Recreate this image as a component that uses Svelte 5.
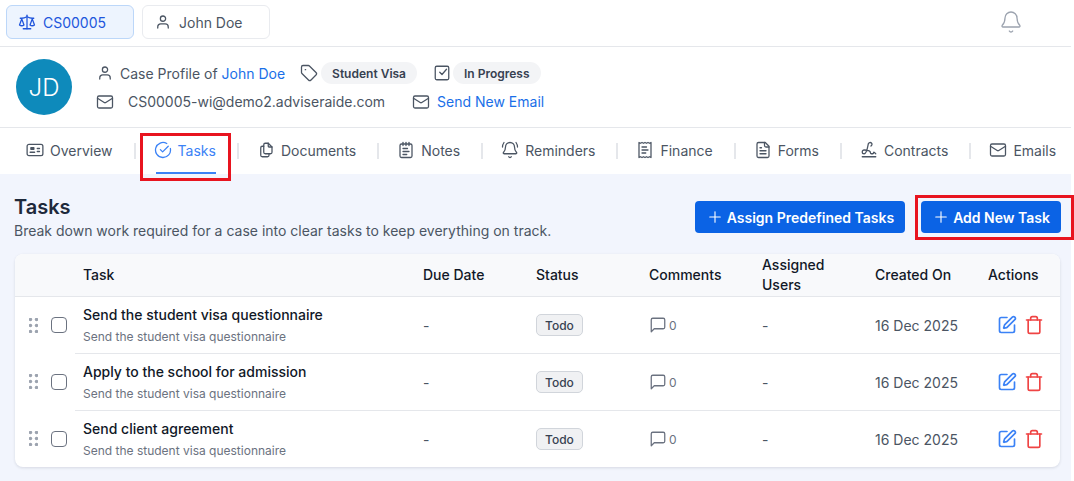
<script>
const I = {
  scale: ["m16 16 3-8 3 8c-.87.65-1.92 1-3 1s-2.13-.35-3-1Z","m2 16 3-8 3 8c-.87.65-1.92 1-3 1s-2.13-.35-3-1Z","M7 21h10","M12 3v18","M3 7h2c2 0 5-1 7-2 2 1 5 2 7 2h2"],
  user: ["M8.500 7.500a3.500 3.500 0 1 0 7 0a3.500 3.500 0 0 0 -7 0","M19 20v-1.500a4 4 0 0 0-4-4H9a4 4 0 0 0-4 4v1.500"],
  tag: ["M12.586 2.586A2 2 0 0 0 11.172 2H4a2 2 0 0 0-2 2v7.172a2 2 0 0 0 .586 1.414l8.704 8.704a2.426 2.426 0 0 0 3.420 0l6.580-6.580a2.426 2.426 0 0 0 0-3.420z","M7 7.500h.5"],
  check: ["M5 3h14a2 2 0 0 1 2 2v14a2 2 0 0 1-2 2H5a2 2 0 0 1-2-2V5a2 2 0 0 1 2-2z","m9 11 3 3 6-7"],
  bell: ["M10.268 21a2 2 0 0 0 3.464 0","M3.262 15.326A1 1 0 0 0 4 17h16a1 1 0 0 0 .74-1.673C19.410 13.956 18 12.499 18 8A6 6 0 0 0 6 8c0 4.499-1.411 5.956-2.738 7.326"],
  mail: ["M4 4h16a2 2 0 0 1 2 2v12a2 2 0 0 1-2 2H4a2 2 0 0 1-2-2V6a2 2 0 0 1 2-2z","m22 7-8.970 5.700a1.940 1.940 0 0 1-2.060 0L2 7"],
  card: ["M4 4.500h16a2.500 2.500 0 0 1 2.500 2.500v10a2.500 2.500 0 0 1-2.500 2.500H4a2.500 2.500 0 0 1-2.500-2.500V7A2.500 2.500 0 0 1 4 4.500z","M6.500 9h4v2h-4z","M5.500 15h6","M15 10h3","M15 14h3"],
  tasks: ["M21.801 10A10 10 0 1 1 17 3.335","m8.500 11.500 3 3L19 7"],
  docs: ["M15 3v4a1 1 0 0 0 1 1h4","M18 17h-7a2 2 0 0 1 -2 -2v-10a2 2 0 0 1 2 -2h4l5 5v7a2 2 0 0 1 -2 2z","M16 17v2a2 2 0 0 1 -2 2h-7a2 2 0 0 1 -2 -2v-10a2 2 0 0 1 2 -2h2"],
  notes: ["M8 2v4","M12 2v4","M16 2v4","M6 4h12a2 2 0 0 1 2 2v14a2 2 0 0 1-2 2H6a2 2 0 0 1-2-2V6a2 2 0 0 1 2-2z","M8 10h6","M8 14h8","M8 18h5"],
  ring: ["M10.268 21a2 2 0 0 0 3.464 0","M22 8c0-2.300-.8-4.300-2-6","M3.262 15.326A1 1 0 0 0 4 17h16a1 1 0 0 0 .74-1.673C19.410 13.956 18 12.499 18 8A6 6 0 0 0 6 8c0 4.499-1.411 5.956-2.738 7.326","M4 2C2.800 3.700 2 5.700 2 8"],
  receipt: ["M4 2v20l2-1 2 1 2-1 2 1 2-1 2 1 2-1 2 1V2l-2 1-2-1-2 1-2-1-2 1-2-1-2 1Z","M14 8H8","M16 12H8","M13 16H8"],
  file: ["M15 2H6a2 2 0 0 0-2 2v16a2 2 0 0 0 2 2h12a2 2 0 0 0 2-2V7Z","M14 2v4a2 2 0 0 0 2 2h4","M10 9H8","M16 13H8","M16 17H8"],
  sign: ["m21 17-2.156-1.868A.5.5 0 0 0 18 15.500v.5a1 1 0 0 1-1 1h-2a1 1 0 0 1-1-1c0-2.545-3.991-3.970-8.500-4a1 1 0 0 0 0 5c4.153 0 4.745-11.295 5.708-13.500a2.500 2.500 0 1 1 3.310 3.284","M3 21h18"],
  comment: ["M21 15a2 2 0 0 1-2 2H7l-4 4V5a2 2 0 0 1 2-2h14a2 2 0 0 1 2 2z"],
  edit: ["M12 3H5a2 2 0 0 0-2 2v14a2 2 0 0 0 2 2h14a2 2 0 0 0 2-2v-7","M18.375 2.625a1 1 0 0 1 3 3l-9.013 9.014a2 2 0 0 1-.853.505l-2.873.84a.5.5 0 0 1-.62-.62l.84-2.873a2 2 0 0 1 .506-.852z"],
  trash: ["M19 6v14a2 2 0 0 1-2 2H7a2 2 0 0 1-2-2V6","M3 6h18","M8 6V4a2 2 0 0 1 2-2h4a2 2 0 0 1 2 2v2"],
  plus: ["M5 12h14","M12 5v14"]
};
const nav = [
  ["Overview", "card"], ["Tasks", "tasks"], ["Documents", "docs"], ["Notes", "notes"], ["Reminders", "ring"],
  ["Finance", "receipt"], ["Forms", "file"], ["Contracts", "sign"], ["Emails", "mail"]
];
const tasks = ["Send the student visa questionnaire", "Apply to the school for admission", "Send client agreement"];
const heads = ["Due Date", "Status", "Comments", "Assigned Users", "Created On", "Actions"];
</script>

{#snippet icon(name, cls)}
  <svg class={cls} viewBox="0 0 24 24" fill="none" stroke="currentColor" stroke-linecap="round" stroke-linejoin="round">
    {#each I[name] as d}<path {d} />{/each}
  </svg>
{/snippet}

<div class="page">
  <header class="top">
    <div class="tab active">{@render icon("scale", "i18")}<span>CS00005</span></div>
    <div class="tab">{@render icon("user", "i18")}<span>John Doe</span></div>
    <div class="bell">{@render icon("bell", "i24")}</div>
  </header>

  <section class="profile">
    <div class="avatar">JD</div>
    <div class="info">
      <div class="line one">
        {@render icon("user", "i18")}
        <span class="case">Case Profile of <a href="#a">John Doe</a></span>
        {@render icon("tag", "i18 tagi")}
        <span class="chip c1">Student Visa</span>
        {@render icon("check", "i18 chk")}
        <span class="chip c2">In Progress</span>
      </div>
      <div class="line two">
        {@render icon("mail", "i18")}
        <span class="addr">CS00005-wi@demo2.adviseraide.com</span>
        {@render icon("mail", "i18 mail2")}
        <a href="#a" class="send">Send New Email</a>
      </div>
    </div>
  </section>

  <nav class="nav">
    {#each nav as [label, ic], i}
      {#if i > 0}<span class="sep"></span>{/if}
      <div class="item" class:on={label === "Tasks"}>
        {@render icon(ic, "i18")}<span>{label}</span>
      </div>
    {/each}
  </nav>

  <main class="main">
    <div class="head">
      <div>
        <h1>Tasks</h1>
        <p>Break down work required for a case into clear tasks to keep everything on track.</p>
      </div>
      <div class="btns">
        <button>{@render icon("plus", "i18")}Assign Predefined Tasks</button>
        <button>{@render icon("plus", "i18")}Add New Task</button>
      </div>
    </div>

    <div class="table">
      <div class="row thead">
        <div></div>
        <div class="cell">Task</div>
        {#each heads as h}<div class="cell">{h}</div>{/each}
      </div>
      {#each tasks as t, n}
        <div class="row body" class:first={n === 0}>
          <div class="ctl">
            <svg class="grip" viewBox="0 0 9 15" fill="#9ca3af">
              {#each [1.5, 7.5, 13.5] as y}<circle cx="1.5" cy={y} r="1.7" /><circle cx="7.5" cy={y} r="1.7" />{/each}
            </svg>
            <span class="box"></span>
          </div>
          <div class="cell task" class:rule={n > 0}>
            <div class="t1">{t}</div>
            <div class="t2">Send the student visa questionnaire</div>
          </div>
          <div class="cell" class:rule={n > 0}>-</div>
          <div class="cell" class:rule={n > 0}><span class="todo">Todo</span></div>
          <div class="cell cm" class:rule={n > 0}>{@render icon("comment", "i18")}<span>0</span></div>
          <div class="cell" class:rule={n > 0}>-</div>
          <div class="cell" class:rule={n > 0}>16 Dec 2025</div>
          <div class="cell acts" class:rule={n > 0}>
            {@render icon("edit", "i20 blue")}
            {@render icon("trash", "i20 red")}
          </div>
        </div>
      {/each}
    </div>
  </main>

  <div class="mark m1"></div>
  <div class="mark m2"></div>
</div>

<style>
  :global(body) { margin: 0; background: #fff; }
  .page { position: relative; width: 1071px; height: 481px; font-family: Inter, "Liberation Sans", sans-serif; color: #4b5563; font-size: 14px; }
  svg { flex: none; display: block; stroke-width: 1.7; }
  .i18 { width: 18px; height: 18px; }
  .i20 { width: 20px; height: 20px; stroke-width: 2; }
  .i24 { width: 24px; height: 24px; stroke-width: 1.3; }
  a { color: #1a6fe8; text-decoration: none; }

  .top { box-sizing: border-box; border-bottom: 1px solid #e5e7eb; display: flex; align-items: flex-start; gap: 8px; padding: 5px 0 0 6px; height: 47px; }
  .tab { width: 128px; height: 34px; box-sizing: border-box; border: 1px solid #e9ebef; border-radius: 6px; display: flex; align-items: center; gap: 7px; padding-left: 11px; font-size: 14px; }
  .tab.active { background: #edf4fe; border-color: #bcd7f9; color: #2156dc; }
  .bell { margin-left: auto; margin-right: 48px; margin-top: 5px; color: #9ca3af; }

  .profile { box-sizing: border-box; border-bottom: 1px solid #e5e7eb; display: flex; padding: 12px 0 0 16px; height: 81px; }
  .avatar { width: 56px; height: 56px; border-radius: 50%; background: #0e8abb; color: #fff; font-size: 24px; font-weight: 300; display: flex; align-items: center; justify-content: center; }
  .info { margin-left: 24px; display: flex; flex-direction: column; }
  .line { display: flex; align-items: center; }
  .one { height: 28px; }
  .two { height: 29px; }
  .case { margin-left: 6px; }
  .one :global(.tagi) { margin-left: 15px; }
  .chip { background: #f3f4f6; border-radius: 11px; height: 22px; display: flex; align-items: center; padding: 0 11px; font-size: 12px; font-weight: 600; color: #374151; }
  .c1 { margin-left: 3px; }
  .c2 { margin-left: 2px; }
  .one :global(.chk) { margin-left: 16px; }
  .addr { margin-left: 14px; }
  .two :global(.mail2) { margin-left: 27px; }
  .send { margin-left: 7px; }

  .nav { height: 46px; display: flex; align-items: flex-start; padding-left: 26px; background: #fff; }
  .item { display: flex; align-items: center; gap: 6px; height: 46px; box-sizing: border-box; padding-bottom: 2px; position: relative; margin: 0 21px 0 18px; }
  .item:first-child { margin-left: 0; }
  .sep { width: 2px; height: 16px; background: #e5e7eb; margin-top: 15px; flex: none; }
  .item.on { color: #3b82f6; }
  .item.on::after { content: ""; position: absolute; left: 2px; right: 0; bottom: 0; height: 2px; background: #3b82f6; }

  .main { background: #f2f5fd; height: 307px; box-sizing: border-box; padding: 0 10px 0 15px; }
  .head { height: 80px; display: flex; justify-content: space-between; align-items: flex-start; }
  h1 { margin: 21px 0 0 -1px; font-size: 20px; line-height: 24px; font-weight: 600; color: #1e293b; }
  p { margin: 2px 0 0 -1px; font-size: 14px; line-height: 20px; color: #4b5563; }
  .btns { display: flex; gap: 16px; margin-top: 27px; }
  button { height: 32px; border: 0; border-radius: 4px; background: #0b63e5; color: #fff; font: 600 14px Inter, "Liberation Sans", sans-serif; display: flex; align-items: center; gap: 3px; padding: 0 11px; }
  button svg { stroke-width: 1.5; }

  .table { background: #fff; border-radius: 8px; box-shadow: 0 1px 3px rgba(17, 24, 39, .12); overflow: hidden; width: 1045px; }
  .row { display: grid; grid-template-columns: 60px 340px repeat(6, 113px); }
  .thead { height: 43px; background: #f8f9fb; border-bottom: 1px solid #e5e7eb; box-sizing: border-box; color: #111827; font-weight: 500; line-height: 20px; }
  .cell { padding-left: 8px; display: flex; align-items: center; box-sizing: border-box; }
  .body { height: 57px; }
  .body.first { height: 56px; }
  .rule { border-top: 1px solid #e5e7eb; }
  .ctl { display: flex; align-items: center; padding-left: 14px; gap: 13px; }
  .grip { width: 9px; height: 15px; }
  .box { width: 16px; height: 16px; box-sizing: border-box; border: 1.5px solid #6b7280; border-radius: 4px; }
  .task { flex-direction: column; align-items: flex-start; justify-content: center; }
  .t1 { color: #111827; font-weight: 500; line-height: 20px; }
  .t2 { color: #6b7280; font-size: 12px; line-height: 16px; margin-top: 4px; }
  .todo { background: #f0f1f3; border: 1px solid #d1d5db; border-radius: 5px; font-size: 12px; font-weight: 500; color: #374151; height: 22px; box-sizing: border-box; padding: 0 8px; display: flex; align-items: center; }
  .cm { gap: 2px; font-size: 12px; color: #6b7280; }
  .acts { gap: 7px; padding-left: 17px; }
  .blue { color: #3b82f6; }
  .red { color: #ef4444; }

  .mark { position: absolute; box-sizing: border-box; border: 3px solid #e8141f; pointer-events: none; }
  .m1 { left: 140px; top: 133px; width: 91px; height: 48px; }
  .m2 { left: 915px; top: 195px; width: 159px; height: 45px; }
</style>
